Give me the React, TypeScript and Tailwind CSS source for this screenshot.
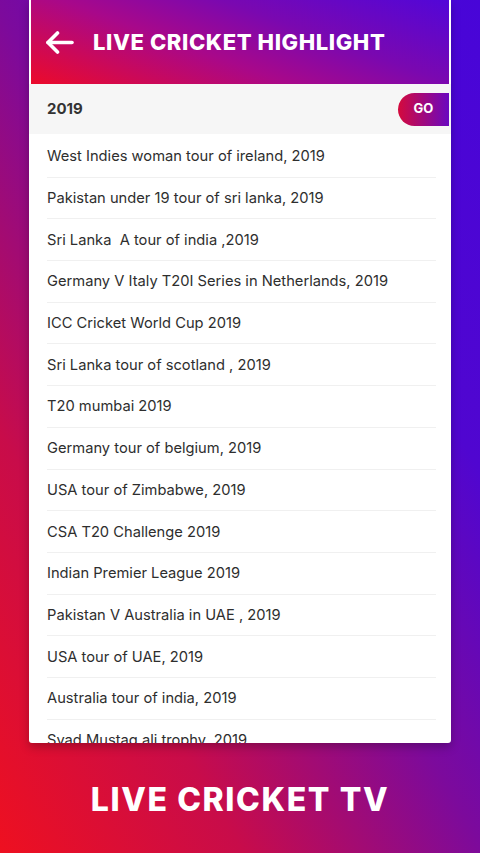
const events = [
  "West Indies woman tour of ireland, 2019",
  "Pakistan under 19 tour of sri lanka, 2019",
  "Sri Lanka  A tour of india ,2019",
  "Germany V Italy T20I Series in Netherlands, 2019",
  "ICC Cricket World Cup 2019",
  "Sri Lanka tour of scotland , 2019",
  "T20 mumbai 2019",
  "Germany tour of belgium, 2019",
  "USA tour of Zimbabwe, 2019",
  "CSA T20 Challenge 2019",
  "Indian Premier League 2019",
  "Pakistan V Australia in UAE , 2019",
  "USA tour of UAE, 2019",
  "Australia tour of india, 2019",
  "Syad Mustaq ali trophy, 2019",
]

export default function App() {
  return (
    <div
      className="w-[480px] h-[853px] overflow-hidden flex flex-col bg-[linear-gradient(60deg,#ee1020_0%,#c80c4a_25%,#7c0a9c_50%,#5006d0_72%,#4805d8_100%)]"
      style={{ fontFamily: "Inter, 'Noto Sans', sans-serif" }}
    >
      <div className="ml-[29px] w-[422px] h-[743px] bg-white flex flex-col rounded-b-[3px] shadow-[0_4px_10px_rgba(0,0,0,0.25)] overflow-hidden">
        <div className="mx-[2px] h-[84px] flex items-center gap-[19px] pl-[14px] bg-[linear-gradient(20deg,#ec0a2a_0%,#a8088a_40%,#7a08b0_65%,#5206d8_100%)]">
          <svg width="29" height="23" viewBox="0 0 29 23" fill="none" stroke="white" strokeWidth="3.6" strokeLinecap="round" strokeLinejoin="round">
            <path d="M27 11.5H3" />
            <path d="M12.5 2L3 11.5 12.5 21" />
          </svg>
          <span className="text-white text-[22px] font-extrabold tracking-[0.6px]">
            LIVE CRICKET HIGHLIGHT
          </span>
        </div>
        <div className="h-[50px] bg-[#f6f6f6] flex items-center justify-between pl-[18px] pr-[2px]">
          <span className="text-[15px] font-bold text-[#333]">2019</span>
          <button className="w-[51px] h-[33px] rounded-l-full bg-[linear-gradient(90deg,#d40a3c,#6a08c0)] text-white text-[13px] font-bold">
            GO
          </button>
        </div>
        <div className="flex-1 overflow-hidden pl-[18px] pr-[15px] pt-[2px]">
          {events.map((e, i) => (
            <div
              key={i}
              className="h-[41.7px] flex items-center border-b border-[#f0f0f0]"
            >
              <span className="text-[14.7px] text-[#2e2e2e] whitespace-pre">{e}</span>
            </div>
          ))}
        </div>
      </div>
      <div className="flex-1 flex items-center justify-center pt-[4px]">
        <span className="text-white text-[32px] font-extrabold tracking-[1.6px]">
          LIVE CRICKET TV
        </span>
      </div>
    </div>
  )
}
